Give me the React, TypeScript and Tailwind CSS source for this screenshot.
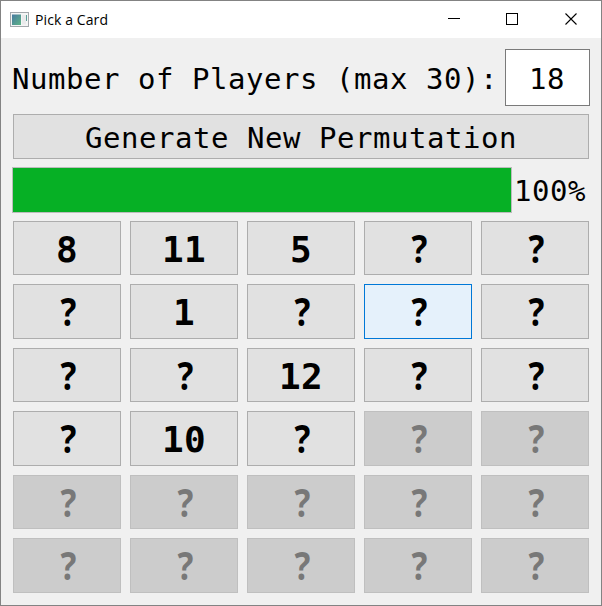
type Card = { label: string; state: "normal" | "hover" | "disabled" };

const labels = [
  "8", "11", "5", "?", "?",
  "?", "1", "?", "?", "?",
  "?", "?", "12", "?", "?",
  "?", "10", "?", "?", "?",
  "?", "?", "?", "?", "?",
  "?", "?", "?", "?", "?",
];
const PLAYERS = 18;
const HOVERED = 8;

const cards: Card[] = labels.map((label, i) => ({
  label,
  state: i >= PLAYERS ? "disabled" : i === HOVERED ? "hover" : "normal",
}));

const tone = {
  normal: "border-[#adadad] bg-[#e1e1e1] text-black",
  hover: "border-[#0078d7] bg-[#e5f1fb] text-black",
  disabled: "border-[#bfbfbf] bg-[#cccccc] text-[#787878]",
};

function CardButton({ card }: { card: Card }) {
  const glyph =
    card.label === "?"
      ? "font-['Noto_Sans',sans-serif] text-[39px] pl-[4px] pb-[2px]"
      : "font-['DejaVu_Sans_Mono',monospace] text-[36px] tracking-[0.33px] pt-[3px]";
  return (
    <button
      disabled={card.state === "disabled"}
      className={`flex items-center justify-center border font-bold leading-none ${tone[card.state]} ${glyph}`}
    >
      <span className={card.label === "?" ? "scale-x-[0.85]" : ""}>{card.label}</span>
    </button>
  );
}

function AppIcon() {
  return (
    <svg width="19" height="16" viewBox="0 0 19 16" className="shrink-0">
      <defs>
        <linearGradient id="pane" x1="0" y1="0" x2="1" y2="1">
          <stop offset="0" stopColor="#4779a0" />
          <stop offset="1" stopColor="#5db486" />
        </linearGradient>
      </defs>
      <rect x="0.5" y="0.5" width="18" height="14" fill="#f4f5f5" stroke="#a3a8ac" />
      <rect x="2" y="2.5" width="9" height="10.5" fill="url(#pane)" />
      <rect x="12" y="3" width="4" height="9.5" fill="#e9eaeb" />
      <rect x="16" y="3" width="1" height="6" fill="#5a9f98" />
    </svg>
  );
}

function TitleBar() {
  return (
    <header className="flex h-[37px] shrink-0 items-center bg-white pl-[9px]">
      <AppIcon />
      <span className="ml-[6px] whitespace-nowrap pt-px font-['Open_Sans',sans-serif] text-[14px] leading-none tracking-[0.1px] text-black">
        Pick a Card
      </span>
      <svg width="136" height="14" viewBox="0 0 136 14" className="ml-auto mr-[20px]" fill="none" stroke="#000" shapeRendering="crispEdges">
        <path d="M3 5.5H15" />
        <rect x="61.5" y="0.5" width="11" height="11" />
        <path d="M120.5 0.5L131.5 11.5M131.5 0.5L120.5 11.5" shapeRendering="auto" strokeWidth="1.1" />
      </svg>
    </header>
  );
}

export default function App() {
  return (
    <div className="flex h-[606px] w-[602px] flex-col overflow-hidden border border-[#838383] bg-[#f0f0f0] font-['DejaVu_Sans_Mono',monospace] text-[29px] leading-none tracking-[0.54px] text-black">
      <TitleBar />
      <main className="flex flex-col pl-[11px]">
        <div className="mt-[11px] flex h-[57px] items-center">
          <label className="w-[493px] shrink-0 whitespace-pre pt-[3px]">Number of Players (max 30):</label>
          <input
            defaultValue="18"
            className="h-[57px] w-[85px] border border-[#7a7a7a] bg-white pr-px pt-[3px] text-center outline-none"
          />
        </div>
        <button className="ml-px mt-2 h-[45px] w-[576px] border border-[#adadad] bg-[#e1e1e1] pt-[3px]">
          Generate New Permutation
        </button>
        <div className="mt-2 flex h-[46px] items-center">
          <div className="h-[46px] w-[500px] shrink-0 border border-[#bcbcbc] bg-[#06b025]" />
          <span className="ml-[2px] pt-[2px]">100%</span>
        </div>
        <div className="ml-px mt-2 grid grid-cols-[repeat(5,108px)] grid-rows-[54px_55px_54px_55px_54px_55px] gap-[9px]">
          {cards.map((card, i) => (
            <CardButton key={i} card={card} />
          ))}
        </div>
      </main>
    </div>
  );
}
